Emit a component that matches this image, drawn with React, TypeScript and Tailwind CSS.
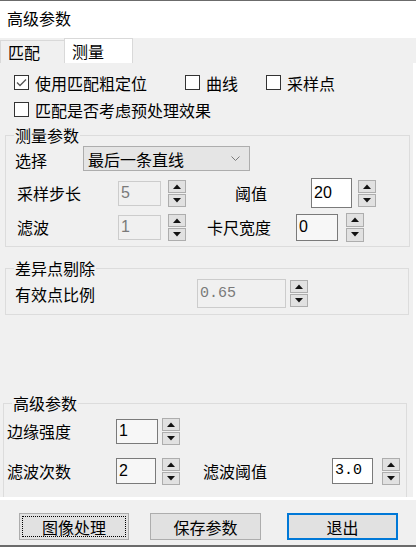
const cjk = "font-['Noto_Sans_CJK_SC',sans-serif]"

function Check({ checked }: { checked?: boolean }) {
  return (
    <span className="flex h-[15px] w-[15px] shrink-0 items-center justify-center border border-[#333333] bg-white">
      {checked && (
        <svg width="11" height="9" viewBox="0 0 11 9">
          <polyline points="1,4.5 4,7.5 10,1.5" fill="none" stroke="#555555" strokeWidth="1.3" />
        </svg>
      )}
    </span>
  )
}

function Spin({ h = 26 }: { h?: number }) {
  const half = h === 28 ? "h-[14px]" : "h-[13px]"
  return (
    <div className="flex w-[18px] shrink-0 flex-col gap-[1px]">
      <div className={`flex ${half} items-center justify-center border border-[#adadad] bg-[#e1e1e1]`}>
        <svg width="8" height="5" viewBox="0 0 8 5">
          <polygon points="0,5 4,0.5 8,5" fill="#111" />
        </svg>
      </div>
      <div className={`flex ${half} items-center justify-center border border-[#adadad] bg-[#e1e1e1]`}>
        <svg width="8" height="5" viewBox="0 0 8 5">
          <polygon points="0,0 4,4.5 8,0" fill="#111" />
        </svg>
      </div>
    </div>
  )
}

function Field({
  value,
  w,
  h,
  disabled,
  mono,
  white,
}: {
  value: string
  w: string
  h: string
  disabled?: boolean
  mono?: boolean
  white?: boolean
}) {
  const font = mono ? "font-['Liberation_Mono',monospace] text-[15px]" : "font-['Liberation_Sans',sans-serif] text-[16px]"
  const look = disabled
    ? "border-[#cccccc] bg-[#f0f0f0] text-[#7a7a7a]"
    : white
      ? "border-[#7a7a7a] bg-white text-black"
      : "border-[#7a7a7a] bg-[#f7f7f7] text-black"
  return (
    <div className={`flex shrink-0 items-center border pl-[2px] leading-[18px] ${w} ${h} ${font} ${look}`}>{value}</div>
  )
}

function Group({
  title,
  className,
  children,
}: {
  title: string
  className: string
  children: React.ReactNode
}) {
  return (
    <fieldset className={`border border-[#dcdcdc] ${className}`}>
      <legend className="ml-[8px] px-[1px] text-[16px] leading-[18px]">{title}</legend>
      {children}
    </fieldset>
  )
}

export default function App() {
  return (
    <div className={`flex h-[547px] w-[416px] flex-col overflow-hidden border-t border-b-2 border-[#6b6b6b] bg-[#f0f0f0] text-[16px] text-black ${cjk}`}>
      <div className="h-[37px] bg-white pl-[7px] pt-[7px] leading-[20px]">高级参数</div>

      <div className="flex h-[25px] items-end">
        <div className="flex h-[23px] w-[64px] items-center border-l border-t border-[#d9d9d9] pl-[7px] leading-[18px]">匹配</div>
        <div className="flex h-[25px] w-[69px] items-center border-x border-t border-[#d9d9d9] bg-white pl-[7px] pb-[1px] leading-[18px]">
          测量
        </div>
      </div>

      <div className="flex h-[437px] flex-col overflow-hidden border-b-[3px] border-r-[3px] border-white leading-[18px]">
        <div className="mt-[12px] flex h-[15px] items-center">
          <div className="flex w-[185px] items-center gap-[6px] pl-[14px]">
            <Check checked />
            <span>使用匹配粗定位</span>
          </div>
          <div className="flex w-[81px] items-center gap-[6px]">
            <Check />
            <span>曲线</span>
          </div>
          <div className="flex items-center gap-[6px]">
            <Check />
            <span>采样点</span>
          </div>
        </div>
        <div className="mt-[12px] flex h-[15px] items-center gap-[6px] pl-[14px]">
          <Check />
          <span>匹配是否考虑预处理效果</span>
        </div>

        <Group title="测量参数" className="ml-[5px] mt-[9px] w-[405px] pb-[6px]">
          <div className="mt-[2px] flex h-[25px] items-center pl-[9px]">
            <span className="w-[68px] pt-[2px]">选择</span>
            <div className="flex h-[25px] w-[167px] items-center justify-between border border-[#adadad] bg-[#e5e5e5] pl-[4px] pr-[9px]">
              <span>最后一条直线</span>
              <svg width="9" height="5" viewBox="0 0 9 5">
                <polyline points="0.5,0.5 4.5,4.5 8.5,0.5" fill="none" stroke="#7a7a7a" strokeWidth="1" />
              </svg>
            </div>
          </div>
          <div className="mt-[9px] flex h-[26px] items-center pl-[11px]">
            <span className="w-[101px]">采样步长</span>
            <Field value="5" w="w-[43px]" h="h-[25px]" disabled />
            <div className="ml-[7px]">
              <Spin />
            </div>
            <span className="ml-[49px] w-[76px]">阈值</span>
            <Field value="20" w="w-[41px]" h="h-[30px]" white />
            <div className="ml-[6px]">
              <Spin />
            </div>
          </div>
          <div className="mt-[8px] flex h-[26px] items-center pl-[11px]">
            <span className="w-[101px]">滤波</span>
            <Field value="1" w="w-[43px]" h="h-[25px]" disabled />
            <div className="ml-[7px]">
              <Spin />
            </div>
            <span className="ml-[21px] w-[89px]">卡尺宽度</span>
            <Field value="0" w="w-[42px]" h="h-[27px]" />
            <div className="ml-[8px]">
              <Spin h={28} />
            </div>
          </div>
        </Group>

        <Group title="差异点剔除" className="ml-[5px] mt-[12px] w-[404px] pb-[6px]">
          <div className="mt-[2px] flex h-[29px] items-center pl-[9px]">
            <span className="w-[182px]">有效点比例</span>
            <Field value="0.65" w="w-[89px]" h="h-[29px]" disabled mono />
            <div className="ml-[4px]">
              <Spin />
            </div>
          </div>
        </Group>

        <Group title="高级参数" className="ml-[3px] mt-[79px] w-[404px] pb-[40px]">
          <div className="mt-[6px] flex h-[26px] items-center pl-[3px]">
            <span className="w-[109px]">边缘强度</span>
            <Field value="1" w="w-[42px]" h="h-[25px]" />
            <div className="ml-[4px]">
              <Spin />
            </div>
          </div>
          <div className="mt-[14px] flex h-[26px] items-center pl-[3px]">
            <span className="w-[109px]">滤波次数</span>
            <Field value="2" w="w-[40px]" h="h-[26px]" />
            <div className="ml-[6px]">
              <Spin />
            </div>
            <span className="ml-[23px] w-[129px]">滤波阈值</span>
            <Field value="3.0" w="w-[41px]" h="h-[26px]" white mono />
            <div className="ml-[9px]">
              <Spin />
            </div>
          </div>
        </Group>
      </div>

      <div className="flex h-[45px] items-start pt-[13px] leading-[18px]">
        <button className="ml-[19px] flex h-[27px] w-[110px] items-center justify-center border border-[#adadad] bg-[#e1e1e1] p-[2px]">
          <span className="flex h-full w-full items-center justify-center border border-dotted border-black">图像处理</span>
        </button>
        <button className="ml-[21px] flex h-[27px] w-[111px] items-center justify-center border border-[#adadad] bg-[#e1e1e1]">
          保存参数
        </button>
        <button className="ml-[26px] flex h-[27px] w-[111px] items-center justify-center border-2 border-[#0078d7] bg-[#e1e1e1]">
          退出
        </button>
      </div>
    </div>
  )
}
